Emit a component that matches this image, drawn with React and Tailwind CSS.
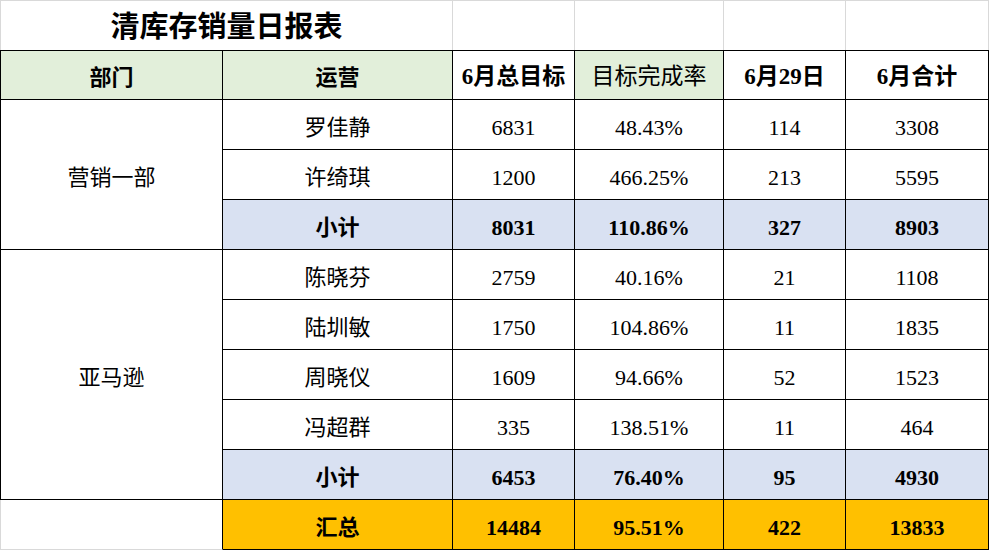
const rows1 = [
  { name: "罗佳静", target: "6831", rate: "48.43%", day: "114", total: "3308" },
  { name: "许绮琪", target: "1200", rate: "466.25%", day: "213", total: "5595" },
];

const rows2 = [
  { name: "陈晓芬", target: "2759", rate: "40.16%", day: "21", total: "1108" },
  { name: "陆圳敏", target: "1750", rate: "104.86%", day: "11", total: "1835" },
  { name: "周晓仪", target: "1609", rate: "94.66%", day: "52", total: "1523" },
  { name: "冯超群", target: "335", rate: "138.51%", day: "11", total: "464" },
];

const cell = "flex items-center justify-center pt-[5px] border-r border-b border-black";

function DataRow({ row, bg = "bg-white", bold = false }) {
  const weight = bold ? "font-bold" : "font-normal";
  return (
    <>
      <div className={`${cell} ${bg} ${weight}`}>{row.name}</div>
      <div className={`${cell} ${bg} ${weight}`}>{row.target}</div>
      <div className={`${cell} ${bg} ${weight}`}>{row.rate}</div>
      <div className={`${cell} ${bg} ${weight}`}>{row.day}</div>
      <div className={`${cell} ${bg} ${weight}`}>{row.total}</div>
    </>
  );
}

export default function App() {
  return (
    <div
      className="w-[990px] h-[551px] bg-white text-black text-[22px] overflow-hidden"
      style={{ fontFamily: '"Liberation Serif", "Noto Sans CJK SC", serif' }}
    >
      <div className="grid grid-cols-[223px_230px_122px_149px_122px_143px] auto-rows-[50px]">
        {/* title row */}
        <div className="col-span-2 flex items-end justify-center pb-[1px] border-l border-t border-r border-[#d9d9d9] text-[29px] font-bold">
          清库存销量日报表
        </div>
        <div className="border-t border-r border-[#d9d9d9]" />
        <div className="border-t border-r border-[#d9d9d9]" />
        <div className="border-t border-r border-[#d9d9d9]" />
        <div className="border-t border-r border-[#d9d9d9]" />

        {/* header */}
        <div className={`${cell} border-t border-l bg-[#e2efda] font-bold`}>部门</div>
        <div className={`${cell} border-t bg-[#e2efda] font-bold`}>运营</div>
        <div className={`${cell} border-t bg-white font-bold text-[23px]`}>6月总目标</div>
        <div className={`${cell} border-t bg-[#e2efda] font-normal text-[23px]`}>目标完成率</div>
        <div className={`${cell} border-t bg-white font-bold text-[23px]`}>6月29日</div>
        <div className={`${cell} border-t bg-white font-bold text-[23px]`}>6月合计</div>

        {/* 营销一部 */}
        <div className={`${cell} border-l row-span-3 bg-white`}>营销一部</div>
        {rows1.map((r) => (
          <DataRow key={r.name} row={r} />
        ))}
        <DataRow
          row={{ name: "小计", target: "8031", rate: "110.86%", day: "327", total: "8903" }}
          bg="bg-[#d9e1f2]"
          bold
        />

        {/* 亚马逊 */}
        <div className={`${cell} border-l row-span-5 bg-white`}>亚马逊</div>
        {rows2.map((r) => (
          <DataRow key={r.name} row={r} />
        ))}
        <DataRow
          row={{ name: "小计", target: "6453", rate: "76.40%", day: "95", total: "4930" }}
          bg="bg-[#d9e1f2]"
          bold
        />

        {/* 汇总 */}
        <div className="border-l border-b border-r border-[#d9d9d9] border-r-black bg-white" />
        <DataRow
          row={{ name: "汇总", target: "14484", rate: "95.51%", day: "422", total: "13833" }}
          bg="bg-[#ffc000]"
          bold
        />
      </div>
    </div>
  );
}
